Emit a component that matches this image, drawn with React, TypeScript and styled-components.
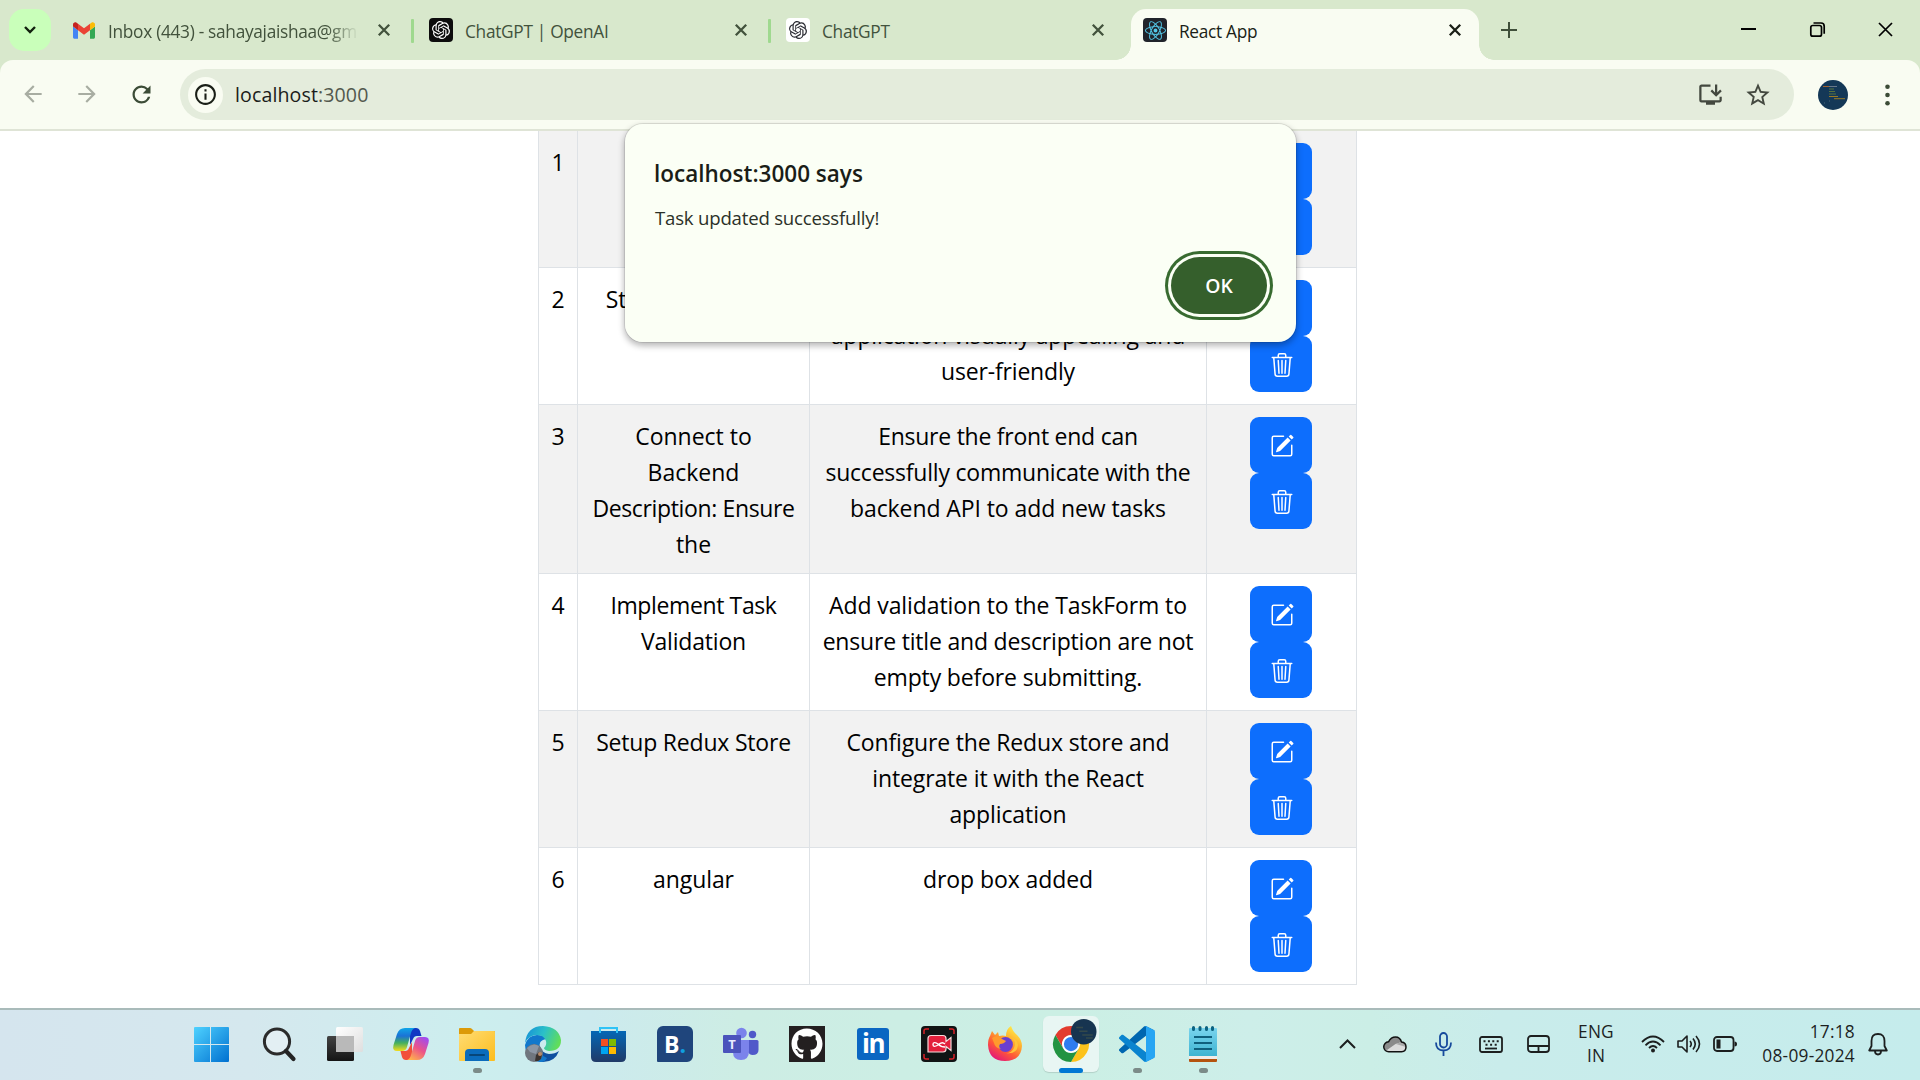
import React from "react";
import styled, { createGlobalStyle } from "styled-components";
import { BsPencilSquare, BsTrash3 } from "react-icons/bs";
import { SiOpenai, SiReact } from "react-icons/si";
import { FaGithub } from "react-icons/fa";
import {
  MdArrowBack,
  MdArrowForward,
  MdRefresh,
  MdOutlineInfo,
  MdStarBorder,
  MdOutlineInstallDesktop,
} from "react-icons/md";

const Global = createGlobalStyle`
  * { box-sizing: border-box; }
  html, body { margin: 0; padding: 0; overflow: hidden; }
  body { font-family: "Open Sans", "Noto Sans", sans-serif; background: #fff; color: #000; }
  svg { display: block; flex: none; overflow: visible; }
`;

const Screen = styled.div`
  position: relative;
  display: flex;
  flex-direction: column;
  width: 1920px;
  height: 1080px;
  overflow: hidden;
`;

/* ---------- tab strip ---------- */

const TabStrip = styled.header`
  display: flex;
  height: 60px;
  padding: 9px 0 0 9px;
  background: #d8e8cc;
`;

const TabSearch = styled.button`
  display: grid;
  place-items: center;
  flex: none;
  width: 42px;
  height: 42px;
  margin-right: 9px;
  padding: 0;
  border: 0;
  border-radius: 15px;
  background: #c9ffba;
`;

const Tab = styled.div<{ $active?: boolean; $width: number; $start?: number; $end: number }>`
  position: relative;
  display: flex;
  flex: none;
  align-items: center;
  width: ${(p) => p.$width}px;
  height: 51px;
  padding: 0 ${(p) => p.$end}px 9px ${(p) => p.$start || 12}px;
  border-radius: 15px 15px 0 0;
  background: ${(p) => (p.$active ? "#f9fcf2" : "transparent")};
  color: ${(p) => (p.$active ? "#1a1f17" : "#42523c")};
  &::before, &::after {
    content: ${(p) => (p.$active ? '""' : "none")};
    position: absolute;
    bottom: 0;
    width: 15px;
    height: 15px;
  }
  &::before { left: -15px; background: radial-gradient(circle at 0 0, transparent 14.5px, #f9fcf2 15px); }
  &::after { right: -15px; background: radial-gradient(circle at 100% 0, transparent 14.5px, #f9fcf2 15px); }
`;

const TabDivider = styled.i`
  flex: none;
  width: 3px;
  height: 24px;
  margin-top: 10px;
  border-radius: 1px;
  background: #9fd98f;
`;

const Favicon = styled.span<{ $bg?: string; $fg?: string }>`
  display: grid;
  place-items: center;
  flex: none;
  width: 24px;
  height: 24px;
  margin-right: 12px;
  border-radius: 4px;
  background: ${(p) => p.$bg || "transparent"};
  color: ${(p) => p.$fg || "inherit"};
`;

const TabTitle = styled.span<{ $fade?: boolean }>`
  flex: 1;
  min-width: 0;
  margin-right: 17px;
  white-space: nowrap;
  font-size: 17.3px;
  line-height: 26px;
  padding-top: 3px;
  letter-spacing: -0.3px;
  mask-image: ${(p) => (p.$fade ? "linear-gradient(90deg, #000 87%, transparent 99%)" : "none")};
`;

const NewTab = styled.div`
  display: flex;
  margin: 13px 0 0 22px;
  height: 16px;
  color: #3f4f39;
`;

const WindowControls = styled.div`
  display: flex;
  gap: 53.5px;
  margin: 13px 27px 0 auto;
  color: #000;
`;

/* ---------- toolbar ---------- */

const ToolbarBack = styled.div`
  background: #d8e8cc;
  height: 71px;
`;

const Toolbar = styled.nav`
  display: flex;
  align-items: center;
  height: 71px;
  padding: 0 24px 0 20px;
  border-bottom: 2px solid #dfe4d6;
  border-radius: 13px 13px 0 0;
  background: #f9fcf2;
`;

const NavButtons = styled.div`
  display: flex;
  gap: 28px;
  width: 160px;
  color: #a8ada2;
  svg:last-child { color: #3c4c37; }
`;

const Omnibox = styled.div`
  display: flex;
  align-items: center;
  width: 1614px;
  height: 51px;
  padding: 0 22px 0 8px;
  border-radius: 26px;
  background: #e4ecdc;
  color: #43483f;
`;

const SiteInfo = styled.span`
  display: grid;
  place-items: center;
  width: 35px;
  height: 36px;
  margin-right: 12px;
  border-radius: 50%;
  background: #f9fcf2;
  color: #1a1f17;
`;

const Url = styled.span`
  margin-right: auto;
  padding-top: 1px;
  font-size: 19.6px;
  line-height: 28px;
  letter-spacing: 0.1px;
  color: #1b1d1a;
  span { color: #53594e; }
`;

const OmniActions = styled.div`
  display: flex;
  align-items: center;
  gap: 20px;
`;

const Avatar = styled.span`
  margin: 0 37px 0 24px;
`;

/* ---------- page ---------- */

const Page = styled.main`
  height: 877px;
  padding-left: 538px;
  background: #fff;
  overflow: hidden;
`;

const Table = styled.div`
  width: 819px;
  border-left: 1px solid #dee2e6;
`;

const Row = styled.div<{ $striped: boolean }>`
  display: grid;
  grid-template-columns: 39px 232px 397px 150px;
  background: ${(p) => (p.$striped ? "#f2f2f2" : "#fff")};
  border-bottom: 1px solid #dee2e6;
`;

const Cell = styled.div`
  min-height: 136px;
  padding: 12px 0;
  border-right: 1px solid #dee2e6;
  text-align: center;
`;

const Line = styled.div<{ $track?: number }>`
  height: 36px;
  padding-top: 1px;
  font-size: 23px;
  line-height: 36px;
  letter-spacing: ${(p) => p.$track || 0}px;
  white-space: nowrap;
`;

const Actions = styled(Cell)`
  display: flex;
  flex-direction: column;
  align-items: center;
  padding-right: 1px;
`;

const ActionButton = styled.button`
  display: grid;
  place-items: center;
  width: 62px;
  height: 56px;
  padding: 1px 0 0 1px;
  border: 0;
  border-radius: 9px;
  background: #0d6efd;
  color: #fff;
`;

/* ---------- alert ---------- */

const Alert = styled.section`
  position: absolute;
  left: 624px;
  top: 123px;
  width: 673px;
  height: 220px;
  padding: 32px 24px 0 29px;
  display: flex;
  flex-direction: column;
  border: 1.5px solid rgba(0, 0, 0, 0.09);
  border-radius: 19px;
  background: #fbfff5;
  background-clip: padding-box;
  box-shadow: 0 3px 6px rgba(0, 0, 0, 0.28);
`;

const AlertTitle = styled.h1`
  margin: 0;
  font-size: 22.5px;
  line-height: 36px;
  font-weight: 600;
  color: #1a1d17;
`;

const AlertText = styled.p`
  margin: 11px 0 0 1px;
  font-size: 18.6px;
  line-height: 30px;
  letter-spacing: -0.2px;
  color: #2b3128;
`;

const OkButton = styled.button`
  align-self: flex-end;
  margin: 24px 5px 0 0;
  width: 96px;
  height: 57px;
  padding: 0;
  flex: none;
  border: 0;
  border-radius: 29px;
  background: #355f2c;
  box-shadow: 0 0 0 3px #fbfff5, 0 0 0 6px #386b30;
  color: #fff;
  font: 600 19.3px "Open Sans", sans-serif;
`;

/* ---------- taskbar ---------- */

const Taskbar = styled.footer`
  display: flex;
  height: 72px;
  padding-left: 180px;
  border-top: 2px solid #a9bbba;
  background: linear-gradient(90deg, #d5e5ee 0, #d5e8ee 250px, #cceeee 480px, #cceaee 590px, #cdede4 740px, #cbefe4 1060px, #cdeee9 1250px, #cbeee6 1370px, #c9eceb 1500px, #c5ecec 1920px);
`;

const Slot = styled.div<{ $open?: boolean; $shift?: number }>`
  position: relative;
  display: grid;
  place-items: center;
  width: 66px;
  height: 68px;
  padding-right: ${(p) => p.$shift || 0}px;
  &::after {
    content: ${(p) => (p.$open ? '""' : "none")};
    position: absolute;
    bottom: 5px;
    left: 29px;
    width: 9px;
    height: 5px;
    border-radius: 3px;
    background: #7b8b88;
  }
`;

const ActiveSlot = styled(Slot)`
  &::before {
    content: "";
    position: absolute;
    left: 5px;
    top: 6px;
    width: 56px;
    height: 56px;
    border-radius: 6px;
    background: #e8f6f3;
    box-shadow: 0 1px 1px rgba(0, 0, 0, 0.13);
  }
  &::after { left: 21px; width: 24px; background: #0078d4; }
  svg { position: relative; }
`;

const Tray = styled.div`
  display: flex;
  align-items: center;
  height: 68px;
  margin-left: 103px;
  color: #1c1f1f;
`;

const TrayIcon = styled.span<{ $before: number }>`
  margin-left: ${(p) => p.$before}px;
`;

const TrayText = styled.div<{ $before: number; $width: number; $right?: boolean; $track?: number }>`
  width: ${(p) => p.$width}px;
  margin-left: ${(p) => p.$before}px;
  font-size: 17.3px;
  line-height: 24px;
  letter-spacing: ${(p) => p.$track || 0}px;
  text-align: ${(p) => (p.$right ? "right" : "center")};
  white-space: nowrap;
`;

/* ---------- icons ---------- */

const Cross = ({ size = 12, w = 2.3 }) => (
  <svg width={size} height={size} viewBox="0 0 12 12">
    <path d="M.8.8l10.4 10.4M11.2.8L.8 11.2" stroke="currentColor" strokeWidth={w} fill="none" />
  </svg>
);

const Gmail = () => (
  <svg width="22" height="17" viewBox="52 42 88 66">
    <path fill="#4285f4" d="M58 108h14V74L52 59v43c0 3.32 2.69 6 6 6" />
    <path fill="#34a853" d="M120 108h14c3.32 0 6-2.69 6-6V59l-20 15" />
    <path fill="#fbbc04" d="M120 48v26l20-15v-8c0-7.42-8.47-11.65-14.4-7.2" />
    <path fill="#ea4335" d="M72 74V48l24 18 24-18v26L96 92" />
    <path fill="#c5221f" d="M52 51v8l20 15V48l-5.6-4.2c-5.94-4.45-14.4-.22-14.4 7.2" />
  </svg>
);

const CodeAvatar = ({ size = 30 }) => (
  <svg width={size} height={size} viewBox="0 0 30 30">
    <circle cx="15" cy="15" r="15" fill="#143857" />
    <path d="M5 6.5h6" stroke="#a0622f" />
    <path d="M11 6.5h8" stroke="#68788a" />
    <path d="M11 9h5M11 11.5h6M11 14h7" stroke="#57723f" />
    <path d="M11 16.5h9M16 18.7h11" stroke="#9b7b24" />
    <path d="M6 23h1M11 21h1" stroke="#48667a" />
  </svg>
);

const WindowsIcon = () => (
  <svg width="36" height="36" viewBox="0 0 36 36">
    <defs>
      <linearGradient id="win" x1="0" y1="0" x2="1" y2="1">
        <stop offset="0" stopColor="#4fd2ff" />
        <stop offset="1" stopColor="#0070d0" />
      </linearGradient>
    </defs>
    <path
      fill="url(#win)"
      d="M2 1h15v17H1V2q0-1 1-1zM18 1h17q1 0 1 1v16H18zM1 19h16v17H2q-1 0-1-1zM18 19h18v16q0 1-1 1H18z"
    />
  </svg>
);

const SearchIcon = () => (
  <svg width="34" height="36" viewBox="0 0 34 36">
    <circle cx="15" cy="15.500" r="12.600" fill="#e3eff3" stroke="#2b2b2b" strokeWidth="3" />
    <path d="M24 25l7.500 8" stroke="#242424" strokeWidth="4.200" strokeLinecap="round" />
  </svg>
);

const TaskViewIcon = () => (
  <svg width="36" height="36" viewBox="0 0 36 36">
    <defs>
      <linearGradient id="tvd" x1="0" y1="0" x2="0" y2="1">
        <stop offset="0" stopColor="#434343" />
        <stop offset="1" stopColor="#141414" />
      </linearGradient>
      <linearGradient id="tvl" x1="0" y1="0" x2="1" y2="1">
        <stop offset="0" stopColor="#fff" />
        <stop offset="1" stopColor="#dedede" />
      </linearGradient>
    </defs>
    <rect x="0" y="10" width="27" height="25" rx="1.500" fill="url(#tvd)" />
    <rect x="9" y="1" width="27" height="25" rx="1.500" fill="url(#tvl)" />
    <path d="M9 10h18v16H10q-1 0-1-1z" fill="#b9b9b9" />
  </svg>
);

const CopilotIcon = () => (
  <svg width="36" height="34" viewBox="0 0 36 34">
    <defs>
      <linearGradient id="cp1" x1="0" y1="0" x2="0" y2="1">
        <stop offset="0" stopColor="#0fa5e8" />
        <stop offset=".35" stopColor="#1b72d6" />
        <stop offset=".65" stopColor="#44b05e" />
        <stop offset="1" stopColor="#f4dc1c" />
      </linearGradient>
      <linearGradient id="cp2" x1=".8" y1="0" x2=".2" y2="1">
        <stop offset="0" stopColor="#a04cf0" />
        <stop offset=".5" stopColor="#ec5488" />
        <stop offset="1" stopColor="#ffb34b" />
      </linearGradient>
    </defs>
    <path d="M17 1h6q3 0 4 3l1.500 5H24q-3 0-4 3l-3 6z" fill="#1238c4" />
    <path d="M19 33h-6q-3 0-4-3l-1.500-6H12q3 0 4-3l3-6z" fill="#f2503a" />
    <path d="M12 1h10q-3 1-4 5l-4 14q-1 4-5 4H4q-5 0-3.500-6L4 7q2-6 8-6z" fill="url(#cp1)" />
    <path d="M24 33H14q3-1 4-5l4-14q1-4 5-4h5q5 0 3.500 6L32 27q-2 6-8 6z" fill="url(#cp2)" />
  </svg>
);

const FolderIcon = () => (
  <svg width="36" height="36" viewBox="0 0 36 36">
    <defs>
      <linearGradient id="fold" x1="0" y1="0" x2="1" y2="1">
        <stop offset="0" stopColor="#ffdc74" />
        <stop offset="1" stopColor="#fcbd1d" />
      </linearGradient>
    </defs>
    <path d="M0 12V3q0-1 1-1h10q1 0 2 1l2 2h20q1 0 1 1v6z" fill="#dc9a08" />
    <path d="M0 8h12l3-3h20q1 0 1 1v28q0 1-1 1H1q-1 0-1-1z" fill="url(#fold)" />
    <path d="M6 35v-8q0-4 4-4h16q4 0 4 4v8z" fill="#0b6cbc" />
    <path d="M11 29h14" stroke="#074679" strokeWidth="2" strokeLinecap="round" />
  </svg>
);

const EdgeIcon = () => (
  <svg width="36" height="36" viewBox="0 0 36 36">
    <defs>
      <linearGradient id="eg" x1="0" y1=".2" x2="1" y2=".5">
        <stop offset="0" stopColor="#1691d8" />
        <stop offset=".5" stopColor="#2bc0c8" />
        <stop offset="1" stopColor="#62de58" />
      </linearGradient>
    </defs>
    <path d="M8 14q5-5 10-2-5 4-3 9 2 6 9 7 6 0 10-3-4 11-16 11Q4 35 3 24z" fill="#0e4f9f" />
    <path d="M0 19Q3 9 12 9q7 0 9 4-7 1-7 8 0 8 8 11-2 4-6 4Q1 35 0 19z" fill="#1278cc" />
    <path d="M0 17Q2 0 18 0q16 1 18 14 0 11-12 11-5-1-5-3 3-3 2-7-2-6-9-6Q4 9 0 17z" fill="url(#eg)" />
    <circle cx="9" cy="27" r="9" fill="#70767e" />
    <path d="M2 22q6-6 12-2l-3 8-6-2z" fill="#8c96a4" />
    <path d="M10 35l1-6 3-3 3 3-1 4q-3 3-6 2z" fill="#3a332f" />
    <circle cx="15" cy="28" r="2" fill="#b98a68" />
  </svg>
);

const StoreIcon = () => (
  <svg width="36" height="36" viewBox="0 0 36 36">
    <defs>
      <linearGradient id="st" x1="0" y1="0" x2="0" y2="1">
        <stop offset="0" stopColor="#0467b5" />
        <stop offset="1" stopColor="#203a68" />
      </linearGradient>
    </defs>
    <path d="M0 5h35v26q0 5-5 5H5q-5 0-5-5z" fill="url(#st)" />
    <path d="M9 7V2h17v5" stroke="#2fc3f6" strokeWidth="2" fill="none" />
    <path d="M10 13h7v7h-7z" fill="#f25022" />
    <path d="M18 13h7v7h-7z" fill="#7fba00" />
    <path d="M10 21h7v7h-7z" fill="#00a4ef" />
    <path d="M18 21h7v7h-7z" fill="#ffb900" />
  </svg>
);

const BookingTile = styled.span`
  display: flex;
  justify-content: center;
  width: 36px;
  height: 36px;
  border-radius: 6px 6px 6px 1px;
  background: #1f457c;
  color: #fff;
  font: 700 23px/36px "Open Sans", sans-serif;
  i { font-style: normal; color: #0f9fe0; }
`;

const TeamsWrap = styled.span`
  display: grid;
  width: 36px;
  height: 36px;
  > * { grid-area: 1 / 1; }
  span {
    z-index: 1;
    width: 18px;
    height: 18px;
    margin-top: 9px;
    background: #4b53bc;
    border-radius: 1px;
    color: #e9eaff;
    font: 700 13px/18px "Open Sans", sans-serif;
    text-align: center;
  }
`;

const TeamsIcon = () => (
  <TeamsWrap>
    <svg width="36" height="36" viewBox="0 0 36 36">
      <circle cx="29.500" cy="8.500" r="3.700" fill="#5059c9" />
      <path d="M25 14h9q1.500 0 1.500 1.500V24q0 5-6 5-3 0-4.500-3z" fill="#5059c9" />
      <circle cx="18.500" cy="7" r="5.300" fill="#7b83eb" />
      <path d="M10 14h16v11q0 9-8 9t-8-8z" fill="#7b83eb" />
    </svg>
    <span>T</span>
  </TeamsWrap>
);

const GithubTile = styled.span`
  display: grid;
  place-items: center;
  width: 36px;
  height: 36px;
  background: #231f20;
  color: #fff;
`;

const LinkedInTile = styled.span`
  width: 32px;
  height: 32px;
  border-radius: 3px;
  background: #0a66c2;
  color: #fff;
  font: 700 26px/31px "Open Sans", sans-serif;
  letter-spacing: -1.4px;
  text-align: center;
`;

const RecorderIcon = () => (
  <svg width="36" height="36" viewBox="0 0 36 36">
    <rect width="36" height="36" rx="4" fill="#101414" />
    <path
      d="M3 8V5q0-2 2-2h3M28 3h3q2 0 2 2v3M33 28v3q0 2-2 2h-3M8 33H5q-2 0-2-2v-3"
      stroke="#d92027"
      strokeWidth="1.500"
      fill="none"
    />
    <path
      d="M10 9.500h12q3 0 3 3v3l5-4v13l-5-4v2.500q0 3-3 3H7V12.500q0-3 3-3z"
      fill="#e3203c"
      stroke="#f6dcdc"
      strokeWidth="1.200"
    />
    <path
      d="M24 21q-4 0-7-3-5-3-5 .5t5 .5q4-4 7-1"
      stroke="#fff"
      strokeWidth="1.400"
      fill="none"
    />
  </svg>
);

const FirefoxIcon = () => (
  <svg width="36" height="36" viewBox="0 0 36 36">
    <defs>
      <linearGradient id="ff" x1=".85" y1=".05" x2=".25" y2="1">
        <stop offset="0" stopColor="#fff14a" />
        <stop offset=".35" stopColor="#ffb02e" />
        <stop offset=".65" stopColor="#ff5a36" />
        <stop offset="1" stopColor="#e2147d" />
      </linearGradient>
    </defs>
    <path
      d="M3 10l2-5 3 4 3-3 1 4q4-1 7 0 0-7 5-10 2 6 6 9 5 5 5 11-1 15-17 15T1 19q0-6 2-9z"
      fill="url(#ff)"
    />
    <circle cx="18.500" cy="18.500" r="7.400" fill="#6a3fd0" />
    <path d="M5 12q5-4 10 1l4 2q-2 3-6 3-2 3 1 5-6-1-7-6z" fill="#ff9a2c" />
    <path d="M24 11q6 4 3 11-3 6-9 5 12 2 13-8 0-5-7-8z" fill="#ffc43a" />
  </svg>
);

const ChromeIcon = () => (
  <svg width="36" height="36" viewBox="0 0 48 48">
    <circle cx="24" cy="24" r="12" fill="#fff" />
    <path
      fill="#e33b2e"
      d="M24,12H44.7812a23.9939,23.9939,0,0,0-41.5639.0029L13.6079,30l.0093-.0024A11.9852,11.9852,0,0,1,24,12Z"
    />
    <circle cx="24" cy="24" r="9.500" fill="#2e7cf0" />
    <path
      fill="#fcc21b"
      d="M34.3913,30.0029,24.0007,48A23.994,23.994,0,0,0,44.78,12.0031H23.9989l-.0025.0093A11.985,11.985,0,0,1,34.3913,30.0029Z"
    />
    <path
      fill="#229342"
      d="M13.6086,30.0031,3.218,12.006A23.994,23.994,0,0,0,24.0025,48L34.3931,30.0029l-.0067-.0068a11.9852,11.9852,0,0,1-20.7778.007Z"
    />
    <circle cx="41" cy="7.500" r="17" fill="#173450" />
    <path d="M31 2h9M35 7h11M39 12h14M44 16h9" stroke="#34484a" strokeWidth="2" />
  </svg>
);

const VsCodeIcon = () => (
  <svg width="36" height="36" viewBox="0 0 100 100">
    <path
      fill="#0066b0"
      d="M96.461 10.796L75.857.876C73.472-.273 70.622.212 68.75 2.083L1.299 63.583c-1.815 1.654-1.813 4.511.004 6.162l5.51 5.009c1.485 1.35 3.722 1.45 5.321.237L93.361 13.37C96.086 11.303 100 13.246 100 16.667v-.24c0-2.4-1.375-4.589-3.539-5.631z"
    />
    <path
      fill="#0a84cf"
      d="M96.461 89.204l-20.604 9.92c-2.385 1.149-5.235.664-7.107-1.207L1.299 36.417c-1.815-1.654-1.813-4.511.004-6.162l5.51-5.009c1.485-1.35 3.722-1.45 5.321-.236l81.227 61.62C96.086 88.697 100 86.754 100 83.333v.24c0 2.4-1.375 4.589-3.539 5.631z"
    />
    <path
      fill="#27a5f3"
      d="M75.858 99.126c-2.386 1.148-5.236.663-7.108-1.209C71.056 100.223 75 98.59 75 95.328V4.672C75 1.41 71.056-.223 68.75 2.083c1.872-1.872 4.722-2.357 7.108-1.21l20.6 9.908C98.624 11.822 100 14.011 100 16.413v67.174c0 2.402-1.377 4.592-3.541 5.633z"
    />
  </svg>
);

const NotepadIcon = () => (
  <svg width="28" height="36" viewBox="0 0 28 36">
    <defs>
      <linearGradient id="np" x1="0" y1="0" x2="0" y2="1">
        <stop offset="0" stopColor="#7ad4ee" />
        <stop offset="1" stopColor="#3eb4d2" />
      </linearGradient>
    </defs>
    <path d="M0 31h28v4q0 1-1 1H1q-1 0-1-1z" fill="#b4530f" />
    <path d="M0 29h28v4H0z" fill="#f2ece8" />
    <path d="M0 3q0-1 1-1h26q1 0 1 1v27H0z" fill="url(#np)" />
    <path d="M4.500 1.500v2M11 1.500v2M17.500 1.500v2M23.500 1.500v2" stroke="#0c6280" strokeWidth="3" strokeLinecap="round" />
    <path d="M5 11h18M5 17h18M5 23h18" stroke="#0f5f7d" strokeWidth="2" />
  </svg>
);

const stroke = { fill: "none", stroke: "currentColor", strokeWidth: 1.8 } as const;

const ChevronUp = () => (
  <svg width="17" height="10" viewBox="0 0 17 10">
    <path d="M1 9l7.500-7.500L16 9" {...stroke} strokeWidth={2} />
  </svg>
);

const CloudIcon = () => (
  <svg width="24" height="17" viewBox="0 0 24 17">
    <path d="M6 15.800a5 5 0 0 1-.5-10Q8 1 12.500 1t6 5q4.500.5 4.500 5t-4.500 4.800z" fill="#dcdcdc" />
    <path d="M1 10q1-4 4.500-4.200Q8 1 12.500 1t6 5l-6 2L4 14q-3-1-3-4z" fill="#8b8b8b" />
    <path d="M18.500 6q4.500.5 4.500 5l-10-3z" fill="#aaa" />
    <path d="M6 15.800a5 5 0 0 1-.5-10Q8 1 12.500 1t6 5q4.500.5 4.500 5t-4.500 4.800z" {...stroke} stroke="#111" strokeWidth={1.5} />
  </svg>
);

const MicIcon = () => (
  <svg width="17" height="24" viewBox="0 0 17 24">
    <rect x="5" y="1" width="7" height="14.500" rx="3.500" {...stroke} stroke="#164a9c" />
    <path d="M1 10.500q0 8 7.500 8t7.500-8M8.500 18.500V24" {...stroke} stroke="#164a9c" />
  </svg>
);

const KeyboardIcon = () => (
  <svg width="24" height="17" viewBox="0 0 24 17">
    <rect x="1" y="1" width="22" height="15" rx="2" {...stroke} />
    <path d="M4.500 5.300h16" {...stroke} strokeWidth={2} strokeDasharray="2 2.400" />
    <path d="M6.500 8.800h12" {...stroke} strokeWidth={2} strokeDasharray="2 2.600" />
    <path d="M6 12.500h12" {...stroke} />
  </svg>
);

const TouchpadIcon = () => (
  <svg width="23" height="18" viewBox="0 0 23 18">
    <rect x="1" y="1" width="21" height="16" rx="3" {...stroke} />
    <path d="M1 11h21M11.500 11v6" {...stroke} />
  </svg>
);

const WifiIcon = () => (
  <svg width="24" height="18" viewBox="0 0 24 18">
    <path d="M1 7q11-11 22 0M4.500 10.300q7.500-7.500 15 0M8 13q4-4 8 0" {...stroke} />
    <circle cx="12" cy="15.500" r="2" fill="currentColor" />
  </svg>
);

const VolumeIcon = () => (
  <svg width="24" height="20" viewBox="0 0 24 20">
    <path d="M1 7v6h4l5 5V2L5 7zM13 7q2.500 3 0 6M16 4.500q4.500 5.500 0 11M19 2q7 8 0 16" {...stroke} strokeWidth={1.600} strokeLinejoin="round" />
  </svg>
);

const BatteryIcon = () => (
  <svg width="24" height="16" viewBox="0 0 24 16">
    <rect x="1" y="1" width="19.500" height="14" rx="3" {...stroke} />
    <path d="M3.500 3.500h4v9h-4zM21.500 5.500q2.500 0 2.500 2.500t-2.500 2.500z" fill="currentColor" />
  </svg>
);

const BellIcon = () => (
  <svg width="20" height="23" viewBox="0 0 20 23">
    <path d="M10 1q-6.500 0-6.500 7v5L1.200 17.500h17.600L16.500 13V8q0-7-6.500-7zM7 18q0 3.500 3 3.500t3-3.500" {...stroke} strokeLinejoin="round" />
  </svg>
);

/* ---------- data ---------- */

type TextLine = [string, number?];

const tasks: { id: number; title: TextLine[]; body: TextLine[] }[] = [
  { id: 1, title: [], body: [] },
  {
    id: 2,
    title: [["Style Application", -0.1]],
    body: [["\u00a0"], ["application visually appealing and", -0.18], ["user-friendly", -0.18]],
  },
  {
    id: 3,
    title: [["Connect to"], ["Backend"], ["Description: Ensure", -0.36], ["the"]],
    body: [
      ["Ensure the front end can", -0.25],
      ["successfully communicate with the", -0.22],
      ["backend API to add new tasks", -0.09],
    ],
  },
  {
    id: 4,
    title: [["Implement Task", -0.38], ["Validation", -0.18]],
    body: [
      ["Add validation to the TaskForm to", -0.11],
      ["ensure title and description are not", -0.19],
      ["empty before submitting.", -0.14],
    ],
  },
  {
    id: 5,
    title: [["Setup Redux Store", -0.2]],
    body: [
      ["Configure the Redux store and", -0.16],
      ["integrate it with the React", -0.13],
      ["application", -0.1],
    ],
  },
  { id: 6, title: [["angular", -0.1]], body: [["drop box added", -0.08]] },
];

const Lines = ({ items }: { items: TextLine[] }) => (
  <>
    {items.map(([text, track]) => (
      <Line key={text} $track={track}>
        {text}
      </Line>
    ))}
  </>
);

export default function App() {
  return (
    <Screen>
      <Global />
      <TabStrip>
        <TabSearch>
          <svg width="12" height="8" viewBox="0 0 12 8">
            <path d="M1 1l5 5 5-5" stroke="#12210e" strokeWidth="2.400" fill="none" />
          </svg>
        </TabSearch>
        <Tab $width={351} $end={21}>
          <Favicon>
            <Gmail />
          </Favicon>
          <TabTitle $fade>Inbox (443) - sahayajaishaa@gm</TabTitle>
          <Cross />
        </Tab>
        <TabDivider />
        <Tab $width={354} $start={15} $end={21}>
          <Favicon $bg="#0d0d0d" $fg="#fff">
            <SiOpenai size={18} />
          </Favicon>
          <TabTitle>ChatGPT | OpenAI</TabTitle>
          <Cross />
        </Tab>
        <TabDivider />
        <Tab $width={360} $start={15} $end={27}>
          <Favicon $bg="#fff" $fg="#2a2b32">
            <SiOpenai size={18} />
          </Favicon>
          <TabTitle>ChatGPT</TabTitle>
          <Cross />
        </Tab>
        <Tab $active $width={348} $end={18}>
          <Favicon $bg="#20232a" $fg="#53c8e8">
            <SiReact size={21} />
          </Favicon>
          <TabTitle>React App</TabTitle>
          <Cross />
        </Tab>
        <NewTab>
          <svg width="16" height="16" viewBox="0 0 16 16">
            <path d="M8 0v16M0 8h16" stroke="currentColor" strokeWidth="2" />
          </svg>
        </NewTab>
        <WindowControls>
          <svg width="15" height="15" viewBox="0 0 15 15">
            <path d="M0 7h15" stroke="currentColor" strokeWidth="2" />
          </svg>
          <svg width="15" height="15" viewBox="0 0 15 15">
            <rect x=".8" y="3.500" width="10.700" height="10.700" rx="2" fill="none" stroke="currentColor" strokeWidth="1.700" />
            <path d="M3.500 1H11q3.200 0 3.200 3.200v7.500" fill="none" stroke="currentColor" strokeWidth="1.700" />
          </svg>
          <Cross size={15} w={1.4} />
        </WindowControls>
      </TabStrip>

      <ToolbarBack>
        <Toolbar>
          <NavButtons>
            <MdArrowBack size={26} />
            <MdArrowForward size={26} />
            <MdRefresh size={27} />
          </NavButtons>
          <Omnibox>
            <SiteInfo>
              <MdOutlineInfo size={25} />
            </SiteInfo>
            <Url>
              localhost<span>:3000</span>
            </Url>
            <OmniActions>
              <MdOutlineInstallDesktop size={27} />
              <MdStarBorder size={28} />
            </OmniActions>
          </Omnibox>
          <Avatar>
            <CodeAvatar />
          </Avatar>
          <svg width="5" height="22" viewBox="0 0 5 22">
            <g fill="#3c4c37">
              <circle cx="2.500" cy="2.700" r="2.300" />
              <circle cx="2.500" cy="11" r="2.300" />
              <circle cx="2.500" cy="19.300" r="2.300" />
            </g>
          </svg>
        </Toolbar>
      </ToolbarBack>

      <Page>
        <Table>
          {tasks.map((task) => (
            <Row key={task.id} $striped={task.id % 2 === 1}>
              <Cell>
                <Line>{task.id}</Line>
              </Cell>
              <Cell>
                <Lines items={task.title} />
              </Cell>
              <Cell>
                <Lines items={task.body} />
              </Cell>
              <Actions>
                <ActionButton>
                  <BsPencilSquare size={24} />
                </ActionButton>
                <ActionButton>
                  <BsTrash3 size={24} />
                </ActionButton>
              </Actions>
            </Row>
          ))}
        </Table>
      </Page>

      <Taskbar>
        <Slot $shift={4}><WindowsIcon /></Slot>
        <Slot><SearchIcon /></Slot>
        <Slot><TaskViewIcon /></Slot>
        <Slot><CopilotIcon /></Slot>
        <Slot $open><FolderIcon /></Slot>
        <Slot><EdgeIcon /></Slot>
        <Slot><StoreIcon /></Slot>
        <Slot><BookingTile>B<i>.</i></BookingTile></Slot>
        <Slot><TeamsIcon /></Slot>
        <Slot><GithubTile><FaGithub size={32} /></GithubTile></Slot>
        <Slot><LinkedInTile>in</LinkedInTile></Slot>
        <Slot><RecorderIcon /></Slot>
        <Slot><FirefoxIcon /></Slot>
        <ActiveSlot $open><ChromeIcon /></ActiveSlot>
        <Slot $open><VsCodeIcon /></Slot>
        <Slot $open><NotepadIcon /></Slot>
        <Tray>
          <TrayIcon $before={0}><ChevronUp /></TrayIcon>
          <TrayIcon $before={27}><CloudIcon /></TrayIcon>
          <TrayIcon $before={28}><MicIcon /></TrayIcon>
          <TrayIcon $before={27}><KeyboardIcon /></TrayIcon>
          <TrayIcon $before={24}><TouchpadIcon /></TrayIcon>
          <TrayText $before={26} $width={40} $track={0.2}>ENG<br />IN</TrayText>
          <TrayIcon $before={25}><WifiIcon /></TrayIcon>
          <TrayIcon $before={12}><VolumeIcon /></TrayIcon>
          <TrayIcon $before={12}><BatteryIcon /></TrayIcon>
          <TrayText $before={18} $width={100} $right $track={0.25}>17:18<br />08-09-2024</TrayText>
          <TrayIcon $before={13}><BellIcon /></TrayIcon>
        </Tray>
      </Taskbar>

      <Alert>
        <AlertTitle>localhost:3000 says</AlertTitle>
        <AlertText>Task updated successfully!</AlertText>
        <OkButton>OK</OkButton>
      </Alert>
    </Screen>
  );
}
